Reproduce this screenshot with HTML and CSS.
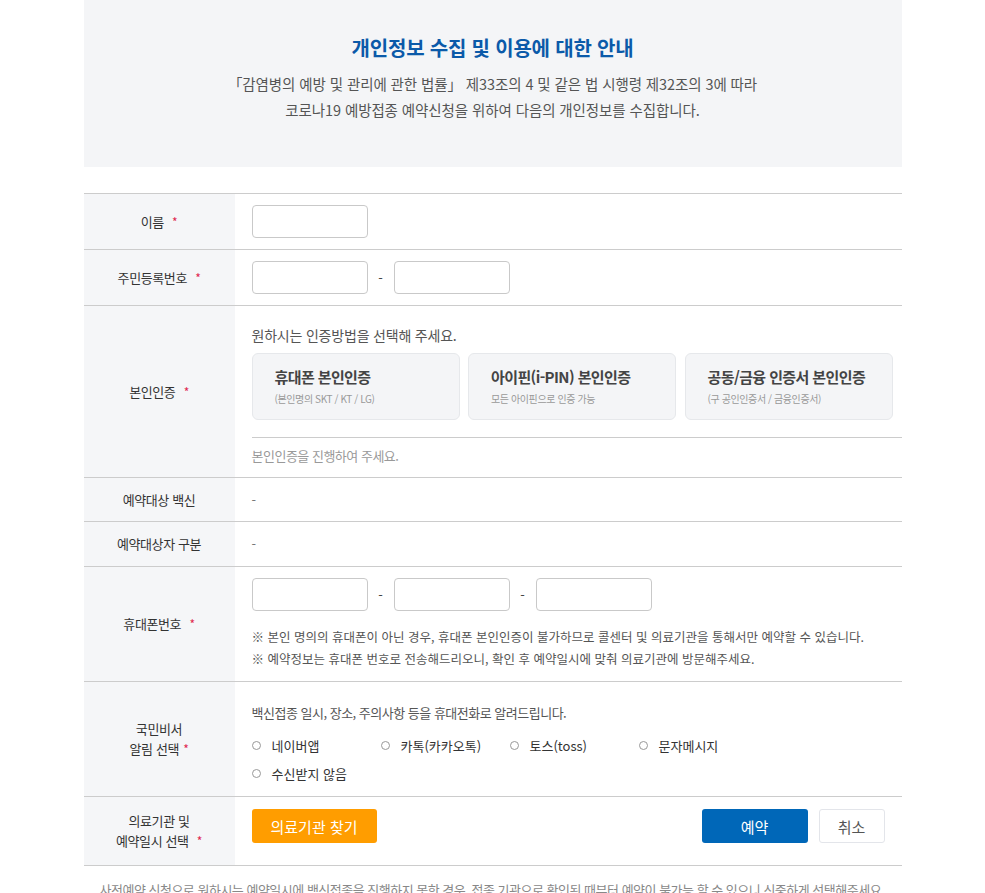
FILE: index.html
```html
<!DOCTYPE html>
<html lang="ko">
<head>
  <meta charset="UTF-8" />
  <meta name="viewport" content="width=device-width, initial-scale=1.0"/>
  <title>코로나19 예방접종 사전예약</title>
  <link rel="stylesheet" href="styles.css">
</head>
<body>
  <div class="page">
    <div class="notice">
      <h2>개인정보 수집 및 이용에 대한 안내</h2>
      <p>「감염병의 예방 및 관리에 관한 법률」 제33조의 4 및 같은 법 시행령 제32조의 3에 따라<br />
      코로나19 예방접종 예약신청을 위하여 다음의 개인정보를 수집합니다.</p>
    </div>

    <div class="form">
      <div class="row">
        <div class="label"><div>이름 <span class="req">*</span></div></div>
        <div class="field">
          <input type="text" class="box" />
        </div>
      </div>

      <div class="row">
        <div class="label"><div>주민등록번호 <span class="req">*</span></div></div>
        <div class="field inline">
          <input type="text" class="box" />
          <span class="dash">-</span>
          <input type="password" class="box" />
        </div>
      </div>

      <div class="row">
        <div class="label"><div>본인인증 <span class="req">*</span></div></div>
        <div class="field auth">
          <div class="guide big">원하시는 인증방법을 선택해 주세요.</div>
          <div class="cards">
            <div class="card">
              <strong>휴대폰 본인인증</strong>
              <span>(본인명의 SKT / KT / LG)</span>
            </div>
            <div class="card">
              <strong>아이핀(i-PIN) 본인인증</strong>
              <span>모든 아이핀으로 인증 가능</span>
            </div>
            <div class="card">
              <strong>공동/금융 인증서 본인인증</strong>
              <span>(구 공인인증서 / 금융인증서)</span>
            </div>
          </div>
          <div class="status">본인인증을 진행하여 주세요.</div>
        </div>
      </div>

      <div class="row short">
        <div class="label"><div>예약대상 백신</div></div>
        <div class="field plain">-</div>
      </div>

      <div class="row short">
        <div class="label"><div>예약대상자 구분</div></div>
        <div class="field plain taller">-</div>
      </div>

      <div class="row">
        <div class="label"><div>휴대폰번호 <span class="req">*</span></div></div>
        <div class="field">
          <div class="inline">
            <input type="text" class="box" />
            <span class="dash">-</span>
            <input type="text" class="box" />
            <span class="dash">-</span>
            <input type="text" class="box" />
          </div>
          <ul class="notes">
            <li>※ 본인 명의의 휴대폰이 아닌 경우, 휴대폰 본인인증이 불가하므로 콜센터 및 의료기관을 통해서만 예약할 수 있습니다.</li>
            <li>※ 예약정보는 휴대폰 번호로 전송해드리오니, 확인 후 예약일시에 맞춰 의료기관에 방문해주세요.</li>
          </ul>
        </div>
      </div>

      <div class="row">
        <div class="label"><div>국민비서<br />알림 선택 <span class="req tight">*</span></div></div>
        <div class="field alarm">
          <div class="guide">백신접종 일시, 장소, 주의사항 등을 휴대전화로 알려드립니다.</div>
          <div class="radios">
            <label class="radio"><span class="dot"></span>네이버앱</label>
            <label class="radio"><span class="dot"></span>카톡(카카오톡)</label>
            <label class="radio"><span class="dot"></span>토스(toss)</label>
            <label class="radio"><span class="dot"></span>문자메시지</label>
            <label class="radio"><span class="dot"></span>수신받지 않음</label>
          </div>
        </div>
      </div>

      <div class="row">
        <div class="label two"><div>의료기관 및<br />예약일시 선택 <span class="req">*</span></div></div>
        <div class="field actions">
          <button class="btn orange">의료기관 찾기</button>
          <div class="right">
            <button class="btn blue">예약</button>
            <button class="btn white">취소</button>
          </div>
        </div>
      </div>
    </div>

    <p class="foot">사전예약 신청으로 원하시는 예약일시에 백신접종을 진행하지 못한 경우, 접종 기관으로 확인된 때부터 예약이 불가능 할 수 있으니 신중하게 선택해주세요.</p>
  </div>
</body>
</html>
```

FILE: styles.css
```css
body {
  margin: 0;
  font-family: "Noto Sans CJK KR", "Noto Sans", sans-serif;
  color: #333;
  background: #fff;
}
.page {
  width: 818px;
  margin: 0 auto;
}
.notice {
  background: #f4f5f7;
  height: 167px;
  box-sizing: border-box;
  padding-top: 34px;
  text-align: center;
}
.notice h2 {
  margin: 0;
  font-size: 20px;
  line-height: 28px;
  font-weight: bold;
  color: #0b5aa9;
  letter-spacing: -0.2px;
}
.notice p {
  margin: 9px 0 0;
  font-size: 14.5px;
  line-height: 26px;
  color: #555;
  letter-spacing: -0.1px;
}

.form {
  margin-top: 26px;
  border-top: 1px solid #ccc;
}
.row {
  display: grid;
  grid-template-columns: 151px 1fr;
  border-bottom: 1px solid #ccc;
}
.label {
  background: #f5f6f8;
  display: flex;
  align-items: center;
  justify-content: center;
  text-align: center;
  font-size: 13px;
  line-height: 20px;
  color: #333;
  letter-spacing: -0.4px;
}
.label.two {
  padding: 14px 0;
}
.req {
  color: #e0284f;
  margin-left: 5px;
  font-size: 12px;
}
.req.tight {
  margin-left: 1px;
}
.field {
  padding: 11px 0 11px 17px;
  font-size: 13px;
  color: #555;
}
.inline {
  display: flex;
  align-items: center;
}
.box {
  width: 116px;
  height: 33px;
  box-sizing: border-box;
  border: 1px solid #c9c9c9;
  border-radius: 4px;
  padding: 0 8px;
  font-size: 13px;
}
.dash {
  width: 26px;
  text-align: center;
  color: #444;
}

.auth {
  padding-top: 19px;
  padding-right: 0;
  padding-bottom: 11px;
}
.guide {
  line-height: 20px;
  letter-spacing: -0.5px;
}
.guide.big {
  font-size: 14px;
  letter-spacing: -0.2px;
}
.cards {
  display: grid;
  grid-template-columns: repeat(3, 208px);
  gap: 8.5px;
  margin-top: 8px;
}
.card {
  height: 67px;
  box-sizing: border-box;
  background: #f4f5f7;
  border: 1px solid #e6e8eb;
  border-radius: 6px;
  padding: 11px 0 0 22px;
  display: flex;
  flex-direction: column;
}
.card strong {
  font-size: 15px;
  line-height: 24px;
  color: #444;
  letter-spacing: -0.6px;
}
.card span {
  font-size: 10px;
  line-height: 20px;
  color: #999;
  letter-spacing: -0.4px;
}
.status {
  margin-top: 17px;
  border-top: 1px solid #ccc;
  padding-top: 8px;
  line-height: 20px;
  color: #999;
  letter-spacing: -0.5px;
}

.short .field {
  padding-top: 12px;
  padding-bottom: 11px;
  line-height: 20px;
}
.short .field.taller {
  padding-bottom: 12px;
}
.plain {
  color: #777;
}

.notes {
  list-style: none;
  margin: 15px 0 0;
  padding: 0;
  font-size: 12.5px;
  line-height: 22px;
  color: #555;
  letter-spacing: 0;
}

.alarm {
  padding-top: 21px;
  padding-bottom: 9px;
}
.radios {
  display: grid;
  grid-template-columns: repeat(4, 129px);
  margin-top: 8px;
}
.radio {
  display: flex;
  align-items: center;
  height: 28px;
  font-size: 13px;
  color: #333;
}
.dot {
  width: 7px;
  height: 7px;
  border: 1px solid #999;
  border-radius: 50%;
  margin-right: 11px;
}

.actions {
  display: flex;
  justify-content: space-between;
  align-items: flex-start;
  padding-top: 12px;
  padding-right: 17px;
}
.right {
  display: flex;
  gap: 11px;
}
.btn {
  height: 34px;
  border-radius: 3px;
  font-family: inherit;
  font-size: 15px;
  border: 0;
  cursor: pointer;
}
.orange {
  width: 125px;
  background: #ff9d00;
  color: #fff;
}
.blue {
  width: 106px;
  background: #0067b8;
  color: #fff;
}
.white {
  width: 66px;
  background: #fff;
  color: #555;
  border: 1px solid #e3e5ea;
}

.foot {
  margin: 14px 0 0;
  padding-left: 16px;
  font-size: 13px;
  line-height: 20px;
  color: #888;
  letter-spacing: -0.5px;
}
```
